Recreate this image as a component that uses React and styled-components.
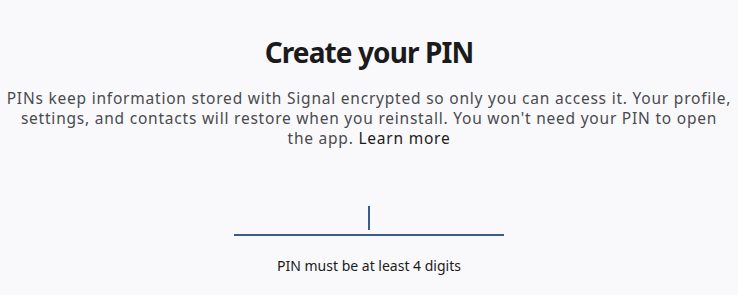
import React from "react";
import styled, { createGlobalStyle } from "styled-components";

const GlobalStyle = createGlobalStyle`
  html, body {
    margin: 0;
    padding: 0;
    background: #f9f9fb;
  }
  body {
    font-family: "Noto Sans", "DejaVu Sans", sans-serif;
  }
`;

// ---------------- Layout ----------------
const Page = styled.main`
  width: 738px;
  height: 295px;
  box-sizing: border-box;
  padding-top: 32px;
  display: flex;
  flex-direction: column;
  align-items: center;
  background: #f9f9fb;
  overflow: hidden;
`;

const Title = styled.h1`
  margin: 0;
  font-size: 28px;
  font-weight: 700;
  line-height: 40px;
  color: #1b1b1b;
  letter-spacing: -0.9px;
`;

const Description = styled.p`
  margin: 16px 0 0;
  padding: 0 2px;
  font-size: 15.5px;
  line-height: 20px;
  letter-spacing: 0.78px;
  color: #4a4a4f;
  text-align: center;
`;

// keeps the closing phrase together on the last line
const Tail = styled.span`
  white-space: nowrap;
`;

const LearnMore = styled.a`
  color: #1b1b1b;
  text-decoration: none;
  cursor: pointer;
`;

const PinField = styled.div`
  margin-top: 56px;
  width: 270px;
  height: 32px;
  box-sizing: border-box;
  padding-bottom: 4px;
  border-bottom: 2px solid #3b5b89;
  display: flex;
  justify-content: center;
  align-items: flex-end;
`;

const Caret = styled.span`
  width: 2px;
  height: 24px;
  background: #3b5b89;
`;

const Hint = styled.div`
  margin-top: 21px;
  font-size: 14px;
  line-height: 18px;
  color: #1b1b1b;
`;

// ---------------- Component ----------------
export default function App() {
  return (
    <>
      <GlobalStyle />
      <Page>
        <Title>Create your PIN</Title>
        <Description>
          PINs keep information stored with Signal encrypted so only you can
          access it. Your profile, settings, and contacts will restore when you
          reinstall. You won't need your PIN to open{" "}
          <Tail>
            the app. <LearnMore>Learn more</LearnMore>
          </Tail>
        </Description>
        <PinField>
          <Caret />
        </PinField>
        <Hint>PIN must be at least 4 digits</Hint>
      </Page>
    </>
  );
}
